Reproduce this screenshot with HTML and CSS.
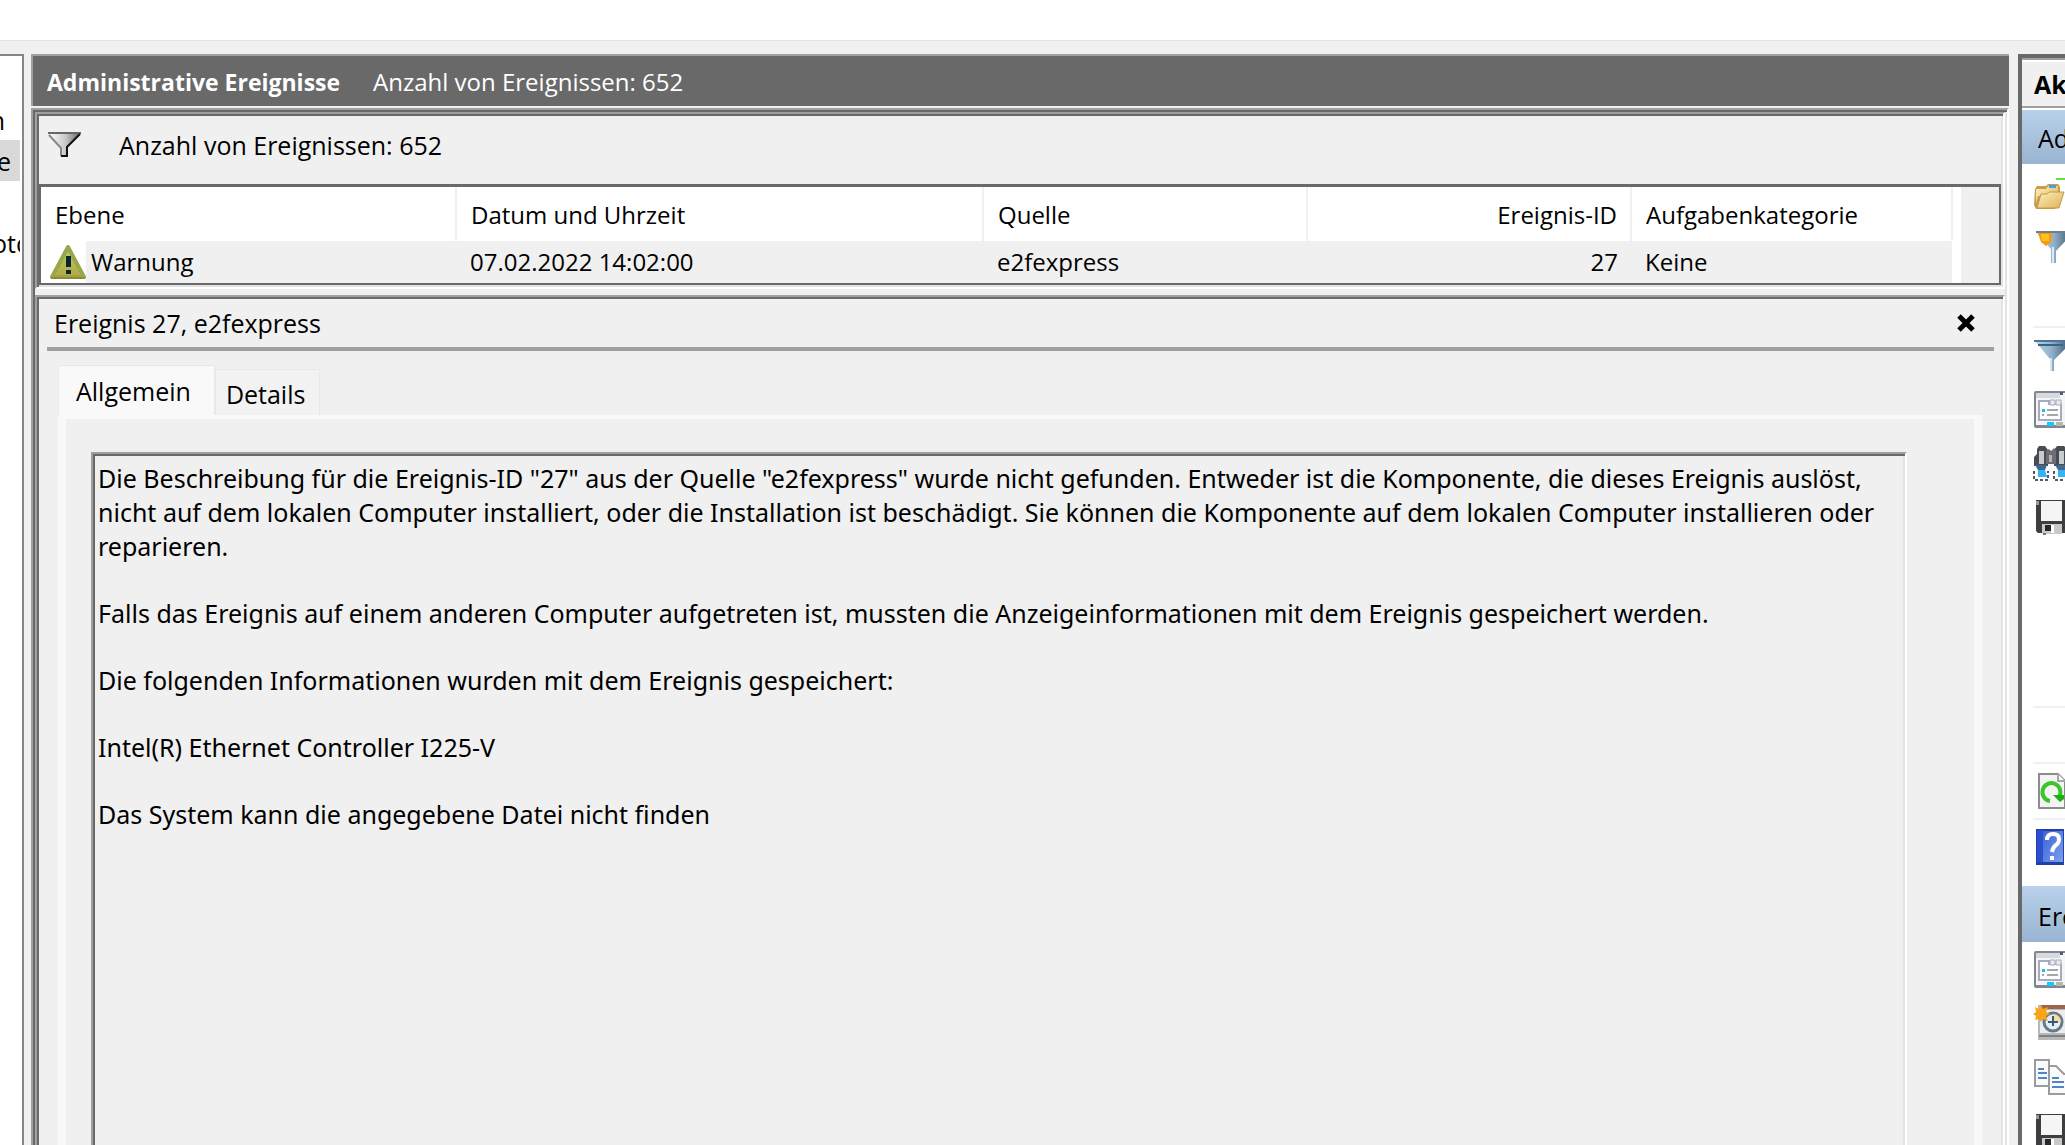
FILE: index.html
```
<!DOCTYPE html>
<html lang="de">
	<head>
		<meta charset="UTF-8">
		<title>Ereignisanzeige</title>
		<link rel="stylesheet" href="styles.css">
	</head>
	<body>
		<svg class="defs" aria-hidden="true">
			<defs>
				<linearGradient id="gWarn" x1="0" y1="0" x2="0" y2="1"><stop offset="0" stop-color="#a9d66b"/><stop offset="1" stop-color="#b9a640"/></linearGradient>
				<linearGradient id="gGray" x1="0" y1="0" x2="1" y2="0"><stop offset="0" stop-color="#fff"/><stop offset=".55" stop-color="#c5c5c5"/><stop offset="1" stop-color="#666"/></linearGradient>
				<linearGradient id="gSteel" x1="0" y1="0" x2="1" y2="0"><stop offset="0" stop-color="#b9d7ea"/><stop offset=".5" stop-color="#8fb0c8"/><stop offset="1" stop-color="#3c566c"/></linearGradient>
				<linearGradient id="gFolder" x1="0" y1="0" x2="1" y2="1"><stop offset="0" stop-color="#fdf0b8"/><stop offset="1" stop-color="#dcb15c"/></linearGradient>
				<linearGradient id="gHelp" x1="0" y1="0" x2="1" y2="1"><stop offset="0" stop-color="#3c62d8"/><stop offset="1" stop-color="#7aa0ee"/></linearGradient>
				<symbol id="iProps" viewBox="0 0 36 40">
					<path d="M3 2h33v37H3q-2 0-2-2V4q0-2 2-2z" fill="#83858f"/>
					<path d="M3 4h33v32H3z" fill="#f5f5f5"/>
					<path d="M3 4h24v5H3z" fill="#d5dade"/>
					<path d="M27 3h3v3h-3z" fill="#4b5c80"/>
					<path d="M6 12h10v3h12v16H6z" fill="#fff" stroke="#a9abbd" stroke-width="2"/>
					<path d="M17 11h5v5h-5zM23 11h5v5h-5z" fill="#e7eaf2" stroke="#a9abbd"/>
					<path d="M9 20h3v3H9z" fill="#14c3f2"/>
					<path d="M14 20h11v2H14zM14 25h11v2H14zM9 25h2v2H9z" fill="#a5a7a9"/>
					<path d="M14 33h7v4h-7z" fill="#16c8f5"/>
					<path d="M23 33h7v4h-7z" fill="#b5b5b5"/>
				</symbol>
				<symbol id="iDisk" viewBox="0 0 36 40">
					<path d="M3 3h33v33H5l-2-2z" fill="#3e3e40"/>
					<path d="M8 4h21v20H8z" fill="#f5f5f5"/>
					<path d="M3 4h3v4H3z" fill="#999"/>
					<path d="M9 27h20v10H9z" fill="#c9c9c9"/>
					<path d="M12 28h6v6h-6z" fill="#26282c"/>
					<path d="M18 28h3v8h-3z" fill="#fff"/>
					<path d="M10 36h3v2h-3z" fill="#777"/>
				</symbol>
			</defs>
		</svg>

		<div class="toolbar"></div>
		<main class="console">
			<nav class="tree">
				<a href="#">n</a>
				<a href="#" class="current">e</a>
				<a href="#"></a>
				<a href="#" class="long">oto</a>
			</nav>

			<section class="center">
				<header class="title">
					<h1>Administrative Ereignisse</h1>
					<span>Anzahl von Ereignissen: 652</span>
				</header>
				<div class="frame sunken">
					<div class="list sunken">
						<div class="filter">
							<svg width="36" height="28" viewBox="0 0 36 28">
								<path d="M2 2h31L20 16v9h-6v-9z" fill="url(#gGray)"/>
								<path d="M1 2h33" stroke="#666" stroke-width="2"/>
								<path d="M2 4l12 13v8" fill="none" stroke="#888" stroke-width="2"/>
								<path d="M33 3L20 16v9h-6" fill="none" stroke="#111" stroke-width="2"/>
							</svg>
							<span>Anzahl von Ereignissen: 652</span>
						</div>
						<div class="grid">
							<table>
								<colgroup><col class="c1"><col class="c2"><col class="c3"><col class="c4"><col></colgroup>
								<thead>
									<tr><th>Ebene</th><th>Datum und Uhrzeit</th><th>Quelle</th><th class="num">Ereignis-ID</th><th>Aufgabenkategorie</th></tr>
								</thead>
								<tbody>
									<tr>
										<td class="level">
											<div>
												<svg width="36" height="34" viewBox="0 0 36 34">
													<path d="M18 2L34 32H2z" fill="url(#gWarn)" stroke="#9aa64c" stroke-width="4" stroke-linejoin="round"/>
													<path d="M1 33h34" stroke="#8f8a35" stroke-width="2"/>
													<path d="M16 11h5v11h-5zM16 25h5v4h-5z" fill="#0b2530"/>
												</svg>
												<span>Warnung</span>
											</div>
										</td>
										<td>07.02.2022 14:02:00</td>
										<td>e2fexpress</td>
										<td class="num">27</td>
										<td>Keine</td>
									</tr>
								</tbody>
							</table>
							<div class="scroll"></div>
						</div>
					</div>

					<div class="details sunken">
						<div class="caption">
							<h2>Ereignis 27, e2fexpress</h2>
							<button type="button" aria-label="Schließen">
								<svg width="20" height="20" viewBox="0 0 20 20"><path d="M3 3l14 14M17 3L3 17" stroke="#000" stroke-width="5"/></svg>
							</button>
						</div>
						<div class="tabs" role="tablist">
							<button type="button" role="tab" aria-selected="true" class="active">Allgemein</button>
							<button type="button" role="tab" aria-selected="false">Details</button>
						</div>
						<div class="page" role="tabpanel">
							<div class="message sunken">
								<p>Die Beschreibung für die Ereignis-ID "27" aus der Quelle "e2fexpress" wurde nicht gefunden. Entweder ist die Komponente, die dieses Ereignis auslöst,<br>
								nicht auf dem lokalen Computer installiert, oder die Installation ist beschädigt. Sie können die Komponente auf dem lokalen Computer installieren oder<br>
								reparieren.</p>
								<p>Falls das Ereignis auf einem anderen Computer aufgetreten ist, mussten die Anzeigeinformationen mit dem Ereignis gespeichert werden.</p>
								<p>Die folgenden Informationen wurden mit dem Ereignis gespeichert:</p>
								<p>Intel(R) Ethernet Controller I225-V</p>
								<p>Das System kann die angegebene Datei nicht finden</p>
							</div>
						</div>
					</div>
				</div>
			</section>

			<aside class="actions">
				<h2>Aktionen</h2>
				<h3>Administrative Ereignisse</h3>
				<button type="button" aria-label="Gespeicherte Protokolldatei öffnen">
					<svg width="36" height="40" viewBox="0 0 36 40">
						<path d="M23 7h10v2H23z" fill="#5ee24a"/>
						<path d="M2 18l2-3h9l2-2h10l2 3v13l-5 9H3l-2-4z" fill="#c79c4b"/>
						<path d="M3 18h10l2-3h10v10H5l-2 8z" fill="url(#gFolder)"/>
						<path d="M16 14h7v3h-7z" fill="#4a9fe0"/>
						<path d="M8 23h6l2-2h15l-5 16H4z" fill="url(#gFolder)" stroke="#c49a4a"/>
					</svg>
				</button>
				<button type="button" aria-label="Benutzerdefinierte Ansicht erstellen">
					<svg width="36" height="40" viewBox="0 0 36 40">
						<path d="M3 7h36v2L23 26v12h-5V24z" fill="url(#gSteel)"/>
						<path d="M3 7h33" stroke="#6a7f90" stroke-width="2"/>
						<path d="M5 8h14l-1 9-5 4-5-4z" fill="#f79a12"/>
						<path d="M8 9h8v7H9z" fill="#ffc21a"/>
						<path d="M20 22v16" stroke="#dcebf4" stroke-width="2"/>
					</svg>
				</button>
				<button type="button" aria-label="Importieren"></button>
				<hr>
				<button type="button" aria-label="Aktuelle Ansicht filtern">
					<svg width="36" height="40" viewBox="0 0 36 40">
						<path d="M1 5h36v4L21 25v11h-4V24z" fill="url(#gSteel)"/>
						<path d="M1 6h35" stroke="#4f7699" stroke-width="2"/>
						<path d="M5 10h25" stroke="#37628a" stroke-width="2"/>
						<path d="M18 23v13" stroke="#d6e6f0" stroke-width="2"/>
					</svg>
				</button>
				<button type="button" aria-label="Eigenschaften"><svg width="36" height="40"><use href="#iProps"/></svg></button>
				<button type="button" aria-label="Suchen">
					<svg width="36" height="40" viewBox="0 0 36 40">
						<path d="M6 3h6l3 4v16H1v-9l3-3V6zM24 3h7l4 4v16H21V7z" fill="#484c57"/>
						<path d="M13 8l3-2 2 2 3-3 2 3v13H13z" fill="#6d6d73"/>
						<path d="M6 8h5v13H6zM26 8h5v13h-5z" fill="#c8cdca"/>
						<path d="M16 12h3v7h-3z" fill="#b5b5b5"/>
						<path d="M2 22h12l-2 5H5zM22 22h12l-2 5h-7z" fill="#406a8c"/>
						<path d="M5 27h7l2 7H5zM25 27h7l2 7h-9z" fill="#37b3f4"/>
						<path d="M1 28v9h14v-9M21 28v9h14v-9" fill="none" stroke="#4b5a6c" stroke-width="2" stroke-dasharray="3 2"/>
					</svg>
				</button>
				<button type="button" aria-label="Alle Ereignisse speichern"><svg width="36" height="40"><use href="#iDisk"/></svg></button>
				<button type="button" aria-label="Ansicht exportieren"></button>
				<button type="button" aria-label="Ansicht kopieren"></button>
				<button type="button" aria-label="Aufgabe anfügen"></button>
				<hr>
				<button type="button" aria-label="Ansicht"></button>
				<hr>
				<button type="button" aria-label="Aktualisieren">
					<svg width="36" height="40" viewBox="0 0 36 40">
						<path d="M6 3h19l7 7v27H6z" fill="#f4f4f4" stroke="#8c8c8c" stroke-width="2"/>
						<path d="M25 3v7h7" fill="#fff" stroke="#a5a5a5" stroke-width="2"/>
						<path d="M17 30a9 9 0 1 1 9-4" fill="none" stroke="#3cc62c" stroke-width="4"/>
						<path d="M20 24h11v4l-4 3z" fill="#1fae14"/>
					</svg>
				</button>
				<hr>
				<button type="button" aria-label="Hilfe">
					<svg width="36" height="40" viewBox="0 0 36 40">
						<path d="M3 2h28v36H3z" fill="#2340a8"/>
						<path d="M4 3h6v32H4z" fill="#2a50d0"/>
						<path d="M10 4h20v31H10z" fill="url(#gHelp)"/>
						<path d="M14 13q0-6 6-6t6 5q0 4-3 6t-4 7" fill="none" stroke="#fff" stroke-width="4"/>
						<path d="M17 29h4v4h-4z" fill="#fff"/>
					</svg>
				</button>
				<h3 class="second">Ereignis 27, e2fexpress</h3>
				<button type="button" aria-label="Ereigniseigenschaften"><svg width="36" height="40"><use href="#iProps"/></svg></button>
				<button type="button" aria-label="Aufgabe an dieses Ereignis anfügen">
					<svg width="36" height="40" viewBox="0 0 36 40">
						<path d="M5 2h31v35H5z" fill="#b8b8b8"/>
						<path d="M8 2h28v4H8z" fill="#a0644c"/>
						<path d="M7 7h29v23H7z" fill="#ececec"/>
						<path d="M6 33h30" stroke="#808080" stroke-width="2"/>
						<circle cx="20" cy="19" r="9" fill="#e4eef5" stroke="#66788a" stroke-width="3"/>
						<path d="M20 11a8 8 0 0 1 8 8h-8z" fill="#f5dea0"/>
						<path d="M20 13v10M15 19h10" fill="none" stroke="#3a5878" stroke-width="2"/>
						<path d="M8 2l2 4 5-2-2 5 4 2-4 2 2 5-5-2-2 3-2-3-4 1 1-4-3-2 3-2-1-5 4 2z" fill="#f8a51c"/>
					</svg>
				</button>
				<button type="button" aria-label="Kopieren">
					<svg width="36" height="40" viewBox="0 0 36 40">
						<path d="M2 3h14v26H2z" fill="#fafafa" stroke="#999ca0" stroke-width="2"/>
						<path d="M5 12h6M5 16h9M5 21h9" stroke="#4c86c6" stroke-width="2"/>
						<path d="M16 9h7l8 8h5v20H16z" fill="#fafafa" stroke="#999ca0" stroke-width="2"/>
						<path d="M19 21h7M19 25h12M19 30h12" stroke="#4c86c6" stroke-width="2"/>
					</svg>
				</button>
				<button type="button" aria-label="Ausgewählte Ereignisse speichern"><svg width="36" height="40"><use href="#iDisk"/></svg></button>
			</aside>
		</main>
	</body>
</html>
```
FILE: styles.css
```
*{
	margin: 0;
	padding: 0;
	box-sizing: border-box;
}
body{
	height: 100vh;
	display: flex;
	flex-direction: column;
	overflow: hidden;
	background-color: #f0f0f0;
	color: #000;
	font-family: "Open Sans", "Noto Sans", sans-serif;
	font-size: 25px;
	line-height: 34px;
}
button{
	font: inherit;
	color: inherit;
	border: 0;
	background: none;
	cursor: pointer;
}
svg{
	display: block;
	flex: none;
}
.defs{
	position: absolute;
	width: 0;
	height: 0;
}
.toolbar{
	flex: none;
	height: 41px;
	background-color: white;
	border-bottom: 1px solid #e3e3e3;
}
.console{
	flex: 1;
	min-height: 0;
	display: flex;
	padding-top: 13px;
	overflow: hidden;
}
/* Windows 3D edge */
.sunken{
	border: 2px solid;
	border-color: #a0a0a0 #fff #fff #a0a0a0;
	box-shadow: inset 2px 2px #696969, inset -2px -2px #e3e3e3;
	padding: 2px;
}

.tree{
	flex: 0 0 24px;
	margin-right: 7px;
	padding: 43px 2px 0 0;
	overflow: hidden;
	background-color: white;
	border: 2px solid #828790;
	border-left: 0;
	border-bottom: 0;
}
.tree a{
	display: flex;
	justify-content: flex-end;
	height: 41px;
	padding-right: 15px;
	line-height: 42px;
	overflow: hidden;
	color: #000;
	text-decoration: none;
}
.tree a.current{
	padding-right: 9px;
	background-color: #d9d9d9;
}
.tree a.long{
	justify-content: flex-start;
	padding: 0;
	text-indent: -8px;
}

.center{
	flex: 1;
	min-width: 0;
	display: flex;
	flex-direction: column;
}
.title{
	flex: none;
	display: flex;
	align-items: center;
	gap: 33px;
	height: 52px;
	padding: 2px 14px 0;
	margin: 0 1px 2px 0;
	font-size: 24px;
	color: white;
	background-color: #696969;
	border-top: 2px solid #a0a0a0;
	border-left: 2px solid #a0a0a0;
}
.title h1{
	font-size: 23px;
}
/* runs on below the window edge */
.frame{
	flex: 1;
	min-height: 0;
	display: flex;
	flex-direction: column;
	gap: 6px;
	margin: 0 1px -12px 0;
}
.filter{
	display: flex;
	align-items: center;
	gap: 36px;
	height: 68px;
	padding: 0 8px 10px;
}
.grid{
	display: flex;
	font-size: 24px;
	background-color: white;
	border: 2px solid #696969;
	border-top-width: 3px;
}
.grid table{
	flex: 1;
	table-layout: fixed;
	border-collapse: collapse;
}
.scroll{
	width: 38px;
	margin-left: 8px;
	background-color: #f0f0f0;
}
.c1{
	width: 415px;
}
.c2{
	width: 527px;
}
.c3{
	width: 324px;
}
.c4{
	width: 324px;
}
th{
	height: 54px;
	padding: 2px 13px 0 14px;
	border-right: 2px solid #f0f0f0;
	font-weight: normal;
	text-align: left;
}
td{
	height: 42px;
	padding: 0 13px 0 14px;
	background-color: #f0f0f0;
}
.num{
	text-align: right;
}
td.level{
	padding: 0;
	background-color: white;
}
.level div{
	display: flex;
	align-items: center;
	padding-left: 9px;
}
.level span{
	flex: 1;
	padding-left: 5px;
	line-height: 42px;
	background-color: #f0f0f0;
}

.details{
	flex: 1;
	min-height: 0;
	display: flex;
	flex-direction: column;
}
.caption{
	flex: none;
	display: flex;
	align-items: center;
	justify-content: space-between;
	height: 52px;
	margin: 0 7px 0 8px;
	padding: 0 18px 0 7px;
	border-bottom: 4px solid #a0a0a0;
}
.caption h2{
	font-size: 25px;
	font-weight: normal;
}
.tabs{
	flex: none;
	display: flex;
	align-items: flex-end;
	height: 64px;
	padding: 0 19px;
}
.tabs button{
	height: 46px;
	padding: 3px 14px 0 10px;
	background-color: #f2f2f2;
	border: 1px solid #e8e8e8;
	border-bottom: 0;
}
.tabs .active{
	height: 50px;
	padding: 0 23px 0 17px;
	background-color: #f9f9f9;
}
.page{
	flex: 1;
	min-height: 0;
	display: flex;
	margin: 0 19px;
	padding: 33px 67px 0 25px;
	border: 8px solid #f9f9f9;
	border-top-width: 4px;
	border-bottom: 0;
}
.message{
	flex: 1;
	min-width: 0;
	padding: 7px 5px;
	border-bottom: 0;
	font-family: "Noto Sans", "Open Sans", sans-serif;
	white-space: nowrap;
	overflow: hidden;
}
.message p{
	margin-bottom: 33px;
}

.actions{
	flex: 0 0 47px;
	margin-left: 8px;
	overflow: hidden;
	white-space: nowrap;
	background-color: white;
	border: 4px solid #696969;
	border-right: 0;
	border-bottom: 0;
}
.actions h2{
	height: 50px;
	padding-left: 12px;
	margin-bottom: 2px;
	font-size: 25px;
	line-height: 48px;
	background-color: #f0f0f0;
	border: 2px solid #a0a0a0;
	border-width: 2px 0;
	box-shadow: inset 0 2px #fff;
}
.actions h3{
	height: 54px;
	padding-left: 16px;
	font-size: 25px;
	font-weight: normal;
	line-height: 56px;
	background: linear-gradient(#b9d1ea, #99b4d1);
}
.actions h3.second{
	height: 56px;
	margin-top: 12px;
	line-height: 60px;
}
.actions button{
	display: flex;
	align-items: center;
	width: 100%;
	height: 54px;
	padding-left: 11px;
}
.actions hr{
	height: 2px;
	margin-left: 11px;
	border: 0;
	background-color: #f0f0f0;
}
```
